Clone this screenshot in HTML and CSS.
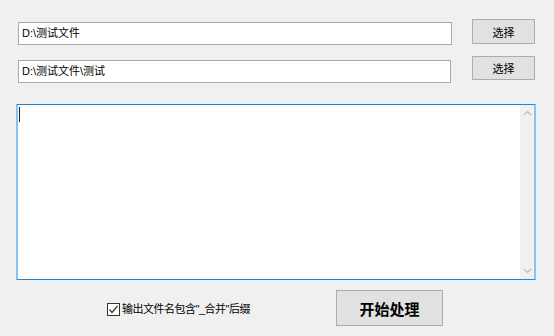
FILE: index.html
```html
<!DOCTYPE html>
<html lang="zh-CN">
<head>
    <meta charset="UTF-8">
    <title>合并文件</title>
    <link rel="stylesheet" href="styles.css">
</head>
<body>
    <div class="window">
        <div class="path-row first">
            <div class="path-box">D:\测试文件</div>
            <button class="pick-btn">选择</button>
        </div>
        <div class="path-row second">
            <div class="path-box">D:\测试文件\测试</div>
            <button class="pick-btn">选择</button>
        </div>

        <div class="log-box">
            <div class="log-text"><span class="caret"></span></div>
            <div class="scrollbar">
                <svg class="arrow" width="13" height="13" viewBox="0 0 13 13"><path d="M3 8 L6.5 4.5 L10 8" fill="none" stroke="#c2c2c2" stroke-width="1.5"/></svg>
                <svg class="arrow" width="13" height="13" viewBox="0 0 13 13"><path d="M3 5 L6.5 8.5 L10 5" fill="none" stroke="#c2c2c2" stroke-width="1.5"/></svg>
            </div>
        </div>

        <div class="bottom-row">
            <label class="check">
                <span class="check-box">
                    <svg width="11" height="11" viewBox="0 0 11 11"><path d="M1.5 5.5 L4 8.5 L9.5 2" fill="none" stroke="#333" stroke-width="1.2"/></svg>
                </span>
                <span class="check-label">输出文件名包含"_合并"后缀</span>
            </label>
            <button class="start-btn">开始处理</button>
        </div>
    </div>
</body>
</html>
```

FILE: styles.css
```css
* {
    margin: 0;
    padding: 0;
    box-sizing: border-box;
}

body {
    background-color: #f0f0f0;
    font-family: "Liberation Sans", "Noto Sans CJK SC", sans-serif;
    font-size: 11px;
    color: #000;
    width: 554px;
    height: 336px;
    overflow: hidden;
}

.window {
    padding-top: 19px;
}

/* path rows */
.path-row {
    display: flex;
    align-items: flex-start;
}

.path-row.second {
    margin-top: 11px;
}

.path-box {
    margin-left: 18px;
    margin-top: 3px;
    width: 434px;
    height: 23px;
    background-color: #fff;
    border: 1px solid #a9a9a9;
    padding-left: 3px;
    line-height: 20px;
    white-space: nowrap;
}

.path-row.second .path-box {
    margin-top: 4px;
    width: 433px;
}

.pick-btn {
    margin-left: 20px;
    width: 63px;
    height: 25px;
    background-color: #e1e1e1;
    border: 1px solid #adadad;
    font-family: inherit;
    font-size: 11px;
    color: #000;
}

.path-row.second .pick-btn {
    margin-left: 21px;
    height: 24px;
}

/* log area */
.log-box {
    margin: 21px 0 0 16px;
    width: 520px;
    height: 176px;
    background-color: #fff;
    border-top: 1px solid #1c84de;
    border-bottom: 1px solid #1c84de;
    border-left: 2px solid #8cc2ee;
    border-right: 2px solid #8cc2ee;
    display: flex;
}

.log-text {
    flex: 1;
    padding: 2px 0 0 1px;
}

.caret {
    display: block;
    width: 1px;
    height: 15px;
    background-color: #222;
}

.scrollbar {
    width: 14px;
    background-color: #f0f0f0;
    display: flex;
    flex-direction: column;
    justify-content: space-between;
    align-items: center;
    padding: 2px 0;
}

/* bottom */
.bottom-row {
    display: flex;
    align-items: flex-start;
    margin-top: 10px;
}

.check {
    display: flex;
    align-items: center;
    flex: none;
    width: 229px;
    margin: 12px 0 0 107px;
}

.check-box {
    width: 13px;
    height: 13px;
    border: 1px solid #333;
    background-color: #fff;
    display: flex;
    align-items: center;
    justify-content: center;
}

.check-label {
    margin-left: 2px;
    line-height: 14px;
    letter-spacing: -0.5px;
}

.start-btn {
    width: 107px;
    height: 36px;
    background-color: #e1e1e1;
    border: 1px solid #adadad;
    font-family: "Noto Sans CJK SC", sans-serif;
    font-size: 15px;
    font-weight: bold;
    color: #000;
}
```
